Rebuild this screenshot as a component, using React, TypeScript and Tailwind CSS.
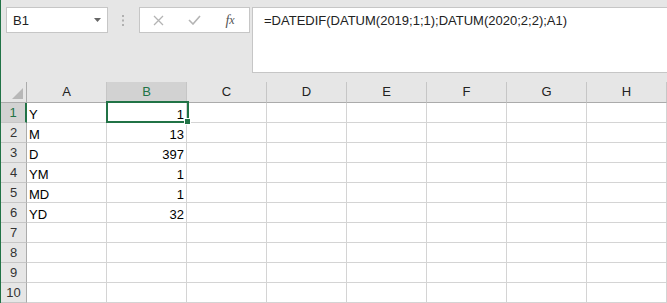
import React from "react";

const cols = ["A", "B", "C", "D", "E", "F", "G", "H"];

const rows: [string, string][] = [
  ["Y", "1"],
  ["M", "13"],
  ["D", "397"],
  ["YM", "1"],
  ["MD", "1"],
  ["YD", "32"],
  ["", ""],
  ["", ""],
  ["", ""],
  ["", ""],
];

function NameBox() {
  return (
    <div className="w-[102px] h-[26px] shrink-0 ml-[5px] bg-white border border-[#c6c6c6] flex items-center justify-between pl-[6px] pr-[5px]">
      <span className="text-[13px] leading-[15px] text-[#222]">B1</span>
      <svg width="8" height="5" viewBox="0 0 8 5">
        <path d="M0 0h7L3.5 4z" fill="#666" />
      </svg>
    </div>
  );
}

function FormulaButtons() {
  return (
    <div className="w-[111px] h-[26px] shrink-0 bg-white border border-[#c6c6c6] flex items-center">
      <span className="w-[36px] flex justify-center">
        <svg width="11" height="11" viewBox="0 0 11 11">
          <path d="M1 1l9 9M10 1l-9 9" stroke="#b4b4b4" strokeWidth="1.3" />
        </svg>
      </span>
      <span className="w-[36px] flex justify-center">
        <svg width="13" height="10" viewBox="0 0 13 10">
          <path d="M1 5l4 4 7-8" stroke="#b4b4b4" strokeWidth="1.6" fill="none" />
        </svg>
      </span>
      <span
        className="w-[36px] flex justify-center italic text-[14px] leading-[15px] text-[#555]"
        style={{ fontFamily: '"Liberation Serif", serif' }}
      >
        f<span className="text-[12px]">x</span>
      </span>
    </div>
  );
}

export default function App() {
  return (
    <div
      className="relative w-[667px] h-[303px] overflow-hidden bg-[#e6e6e6] border-l border-[#217346]"
      style={{ fontFamily: '"Liberation Sans", Arial, sans-serif' }}
    >
      {/* formula bar */}
      <div className="h-[82px] flex items-start pt-[7px]">
        <NameBox />
        <div className="w-[31px] h-[26px] shrink-0 flex items-center justify-center">
          <svg width="3" height="11" viewBox="0 0 3 11">
            <rect x="0" y="0" width="2" height="2" fill="#b0b0b0" />
            <rect x="0" y="4.5" width="2" height="2" fill="#b0b0b0" />
            <rect x="0" y="9" width="2" height="2" fill="#b0b0b0" />
          </svg>
        </div>
        <FormulaButtons />
        <div className="ml-[2px] w-[440px] h-[66px] shrink-0 bg-white border border-[#c6c6c6] pl-[11px] pt-[5px]">
          <div className="text-[13px] leading-[15px] text-[#222] whitespace-nowrap">
            =DATEDIF(DATUM(2019;1;1);DATUM(2020;2;2);A1)
          </div>
        </div>
      </div>

      {/* column headers */}
      <div className="flex h-[21px]">
        <div className="w-[26px] shrink-0 border-r border-b border-[#ababab] flex items-end justify-end pr-[3px] pb-[3px]">
          <svg width="11" height="11" viewBox="0 0 11 11">
            <path d="M11 0V11H0z" fill="#b7b7b7" />
          </svg>
        </div>
        {cols.map((c) => (
          <div
            key={c}
            className={
              c === "B"
                ? "w-[80px] shrink-0 bg-[#d2d2d2] border-r border-b border-r-[#c6c6c6] border-b-[#217346] flex items-center justify-center text-[13px] text-[#217346]"
                : "w-[80px] shrink-0 border-r border-b border-r-[#c6c6c6] border-b-[#ababab] flex items-center justify-center text-[13px] text-[#222]"
            }
          >
            {c}
          </div>
        ))}
      </div>

      {/* rows */}
      {rows.map(([a, b], i) => (
        <div key={i} className="flex h-[20px]">
          <div
            className={
              i === 0
                ? "w-[26px] shrink-0 bg-[#d2d2d2] border-r-2 border-b border-r-[#217346] border-b-[#c6c6c6] flex items-center justify-center text-[13px] text-[#217346]"
                : "w-[26px] shrink-0 border-r border-b border-r-[#ababab] border-b-[#c6c6c6] flex items-center justify-center text-[13px] text-[#333]"
            }
          >
            {i + 1}
          </div>
          <div className="w-[80px] shrink-0 bg-white border-r border-b border-[#d4d4d4] flex items-end pl-[2px] text-[13px] leading-[15px] text-black">
            {a}
          </div>
          <div className="w-[80px] shrink-0 bg-white border-r border-b border-[#d4d4d4] flex items-end justify-end pr-[2px] text-[13px] leading-[15px] text-black">
            {b}
          </div>
          {cols.slice(2).map((c) => (
            <div key={c} className="w-[80px] shrink-0 bg-white border-r border-b border-[#d4d4d4]" />
          ))}
        </div>
      ))}

      {/* selection on B1 */}
      <div className="absolute left-[105px] top-[101px] w-[83px] h-[22px] border-2 border-[#217346]" />
      <div className="absolute left-[183px] top-[118px] w-[7px] h-[7px] bg-[#217346] border border-white" />
    </div>
  );
}
